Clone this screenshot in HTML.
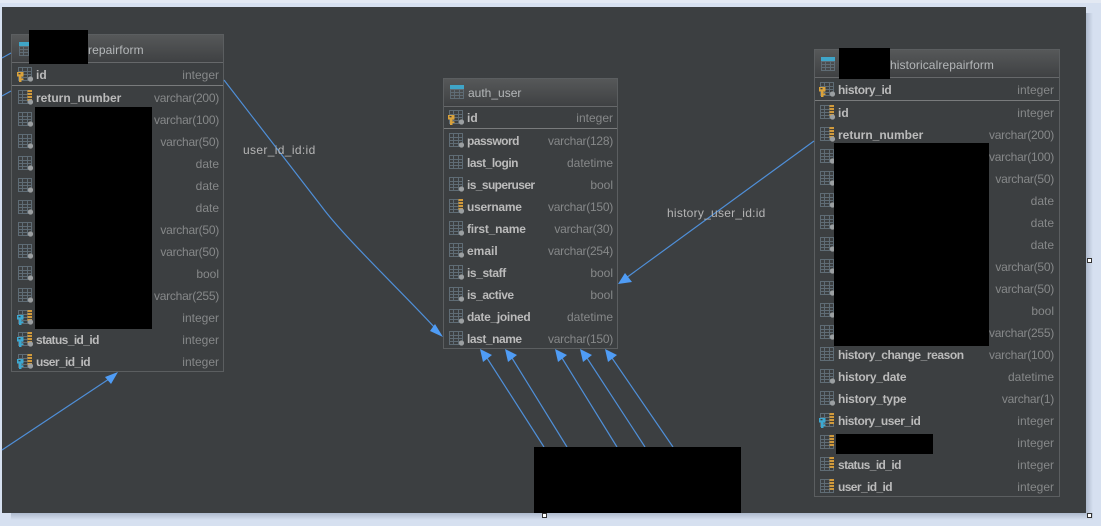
<!DOCTYPE html>
<html><head><meta charset="utf-8"><style>
html,body{margin:0;padding:0;width:1101px;height:526px;overflow:hidden;background:#d6e0f0;font-family:"Liberation Sans",sans-serif;font-size:12px}
.a{position:absolute}
.k{background:#000;position:absolute}
.t{position:absolute;box-sizing:border-box;border:1px solid #5b5e60;background:#3c3f41}
.h{position:absolute;left:0;right:0;top:0;height:27px;background:linear-gradient(#565859,#3f4143);border-bottom:1px solid #66686a;color:#b4b7b9;line-height:29px;padding-left:26px}
.r{position:absolute;left:0;right:0;height:22px;line-height:22px;padding-left:24px;font-weight:bold;color:#bbbbbb}
.n .r{padding-left:23px}
.r b{position:absolute;right:4px;top:0;font-weight:normal;color:#868889}
.w .r b{right:5px}
.r b.v{letter-spacing:-.25px}
.s{position:absolute;left:0;right:0;height:1px;background:#797b7c}
.r svg{position:absolute;left:4px;top:1px}
.n .r svg{left:3px}
.h svg{position:absolute;left:5px;top:5px}
.l{position:absolute;color:#b5b5b5;line-height:14px}
.m{position:absolute;box-sizing:border-box;width:5px;height:5px;background:#fff;border:1px solid #333}
</style></head><body>
<div class="a" style="left:0;top:0;width:1101px;height:3px;background:#e3e9f3"></div>
<div class="a" style="left:1086px;top:13px;width:7px;height:507px;background:linear-gradient(90deg,#adb9cc,#d6e0f0)"></div>
<div class="a" style="left:11px;top:513px;width:1082px;height:7px;background:linear-gradient(#adb9cc,#d6e0f0)"></div>
<div class="a" style="left:2px;top:7px;width:1084px;height:506px;background:#3c3f41"></div>

<svg width="0" height="0" style="position:absolute">
<defs>
<g id="g" fill="none" stroke="#5f6c75"><path d="M1.5 2.5h13v13h-13zM1.5 6.5h13M1.5 9.5h13M1.5 12.5h13M5.5 2.5v13M10.5 2.5v13"/></g>
<circle id="d" cx="13.5" cy="14" r="2.6" fill="#9b9fa1"/>
<g id="o"><rect x="10.5" y="2" width="4.5" height="11" fill="#d19a3c"/><path d="M10.5 4.5h4.5M10.5 7.5h4.5M10.5 10.5h4.5" stroke="#4a4335"/></g>
<g id="kg"><path d="M0 7h6.500v4.500H4.500V17H2v-5.500H0z" fill="#d9a23c"/><path d="M4.500 13.500h2v1.500h-2z" fill="#d9a23c"/><rect x="1.500" y="8" width="2" height="1.300" fill="#3c3f41"/></g>
<g id="kb"><path d="M0 7h6.500v4.500H4.500V17H2v-5.500H0z" fill="#3da8d0"/><path d="M4.500 13.500h2v1.500h-2z" fill="#3da8d0"/><rect x="1.500" y="8" width="2" height="1.300" fill="#3c3f41"/></g>
<g id="T"><use href="#g"/><rect x="1" y="2" width="14" height="4" fill="#3fa5c8"/></g>
</defs></svg>

<!-- repairform -->
<div class="t" style="left:11px;top:34px;width:213px;height:338px">
<div class="h" style="line-height:31px"><svg style="left:6px" width="18" height="18" viewBox="0 0 18 18"><use href="#T"/></svg><span style="position:absolute;left:76px;letter-spacing:.1px">repairform</span></div>
<div class="r" style="top:29px"><svg width="20" height="18" viewBox="0 0 18 18"><use href="#g"/><use href="#d"/><use href="#kg"/></svg>id<b>integer</b></div>
<div class="s" style="top:50px"></div>
<div class="r" style="top:52px"><svg width="20" height="18" viewBox="0 0 18 18"><use href="#g"/><use href="#o"/><use href="#d"/></svg>return_number<b class="v">varchar(200)</b></div>
<div class="r" style="top:74px"><svg width="20" height="18" viewBox="0 0 18 18"><use href="#g"/><use href="#d"/></svg><b class="v">varchar(100)</b></div>
<div class="r" style="top:96px"><svg width="20" height="18" viewBox="0 0 18 18"><use href="#g"/><use href="#d"/></svg><b class="v">varchar(50)</b></div>
<div class="r" style="top:118px"><svg width="20" height="18" viewBox="0 0 18 18"><use href="#g"/><use href="#d"/></svg><b>date</b></div>
<div class="r" style="top:140px"><svg width="20" height="18" viewBox="0 0 18 18"><use href="#g"/><use href="#d"/></svg><b>date</b></div>
<div class="r" style="top:162px"><svg width="20" height="18" viewBox="0 0 18 18"><use href="#g"/><use href="#d"/></svg><b>date</b></div>
<div class="r" style="top:184px"><svg width="20" height="18" viewBox="0 0 18 18"><use href="#g"/><use href="#d"/></svg><b class="v">varchar(50)</b></div>
<div class="r" style="top:206px"><svg width="20" height="18" viewBox="0 0 18 18"><use href="#g"/><use href="#d"/></svg><b class="v">varchar(50)</b></div>
<div class="r" style="top:228px"><svg width="20" height="18" viewBox="0 0 18 18"><use href="#g"/><use href="#d"/></svg><b>bool</b></div>
<div class="r" style="top:250px"><svg width="20" height="18" viewBox="0 0 18 18"><use href="#g"/><use href="#d"/></svg><b class="v">varchar(255)</b></div>
<div class="r" style="top:272px"><svg width="20" height="18" viewBox="0 0 18 18"><use href="#g"/><use href="#o"/><use href="#d"/><use href="#kb"/></svg><b>integer</b></div>
<div class="r" style="top:294px"><svg width="20" height="18" viewBox="0 0 18 18"><use href="#g"/><use href="#o"/><use href="#d"/><use href="#kb"/></svg><span style="letter-spacing:-.6px">status_id_id</span><b>integer</b></div>
<div class="r" style="top:316px"><svg width="20" height="18" viewBox="0 0 18 18"><use href="#g"/><use href="#o"/><use href="#d"/><use href="#kb"/></svg><span style="letter-spacing:-.6px">user_id_id</span><b>integer</b></div>
</div>

<!-- auth_user -->
<div class="t n" style="left:443px;top:78px;width:175px;height:271px">
<div class="h"><svg width="18" height="18" viewBox="0 0 18 18" style="top:4px"><use href="#T"/></svg><span style="position:absolute;left:24px">auth_user</span></div>
<div class="r" style="top:28px"><svg width="20" height="18" viewBox="0 0 18 18"><use href="#g"/><use href="#d"/><use href="#kg"/></svg>id<b>integer</b></div>
<div class="s" style="top:49px"></div>
<div class="r" style="top:51px"><svg width="20" height="18" viewBox="0 0 18 18"><use href="#g"/><use href="#d"/></svg><span style="letter-spacing:-.5px">password</span><b class="v">varchar(128)</b></div>
<div class="r" style="top:73px"><svg width="20" height="18" viewBox="0 0 18 18"><use href="#g"/></svg><span style="letter-spacing:-.5px">last_login</span><b>datetime</b></div>
<div class="r" style="top:95px"><svg width="20" height="18" viewBox="0 0 18 18"><use href="#g"/><use href="#d"/></svg><span style="letter-spacing:-.6px">is_superuser</span><b>bool</b></div>
<div class="r" style="top:117px"><svg width="20" height="18" viewBox="0 0 18 18"><use href="#g"/><use href="#o"/><use href="#d"/></svg><span style="letter-spacing:-.25px">username</span><b class="v">varchar(150)</b></div>
<div class="r" style="top:139px"><svg width="20" height="18" viewBox="0 0 18 18"><use href="#g"/><use href="#d"/></svg><span style="letter-spacing:-.2px">first_name</span><b class="v">varchar(30)</b></div>
<div class="r" style="top:161px"><svg width="20" height="18" viewBox="0 0 18 18"><use href="#g"/><use href="#d"/></svg>email<b class="v">varchar(254)</b></div>
<div class="r" style="top:183px"><svg width="20" height="18" viewBox="0 0 18 18"><use href="#g"/><use href="#d"/></svg><span style="letter-spacing:-.4px">is_staff</span><b>bool</b></div>
<div class="r" style="top:205px"><svg width="20" height="18" viewBox="0 0 18 18"><use href="#g"/><use href="#d"/></svg><span style="letter-spacing:-.45px">is_active</span><b>bool</b></div>
<div class="r" style="top:227px"><svg width="20" height="18" viewBox="0 0 18 18"><use href="#g"/><use href="#d"/></svg><span style="letter-spacing:-.3px">date_joined</span><b>datetime</b></div>
<div class="r" style="top:249px"><svg width="20" height="18" viewBox="0 0 18 18"><use href="#g"/><use href="#d"/></svg><span style="letter-spacing:-.45px">last_name</span><b class="v">varchar(150)</b></div>
</div>

<!-- historicalrepairform -->
<div class="t n w" style="left:814px;top:49px;width:246px;height:448px">
<div class="h" style="line-height:31px"><svg width="18" height="18" viewBox="0 0 18 18"><use href="#T"/></svg><span style="position:absolute;left:75px;letter-spacing:.1px">historicalrepairform</span></div>
<div class="r" style="top:29px"><svg width="20" height="18" viewBox="0 0 18 18"><use href="#g"/><use href="#d"/><use href="#kg"/></svg><span style="letter-spacing:-.4px">history_id</span><b>integer</b></div>
<div class="s" style="top:50px"></div>
<div class="r" style="top:52px"><svg width="20" height="18" viewBox="0 0 18 18"><use href="#g"/><use href="#o"/><use href="#d"/></svg>id<b>integer</b></div>
<div class="r" style="top:74px"><svg width="20" height="18" viewBox="0 0 18 18"><use href="#g"/><use href="#o"/><use href="#d"/></svg>return_number<b class="v">varchar(200)</b></div>
<div class="r" style="top:96px"><svg width="20" height="18" viewBox="0 0 18 18"><use href="#g"/><use href="#d"/></svg><b class="v">varchar(100)</b></div>
<div class="r" style="top:118px"><svg width="20" height="18" viewBox="0 0 18 18"><use href="#g"/><use href="#d"/></svg><b class="v">varchar(50)</b></div>
<div class="r" style="top:140px"><svg width="20" height="18" viewBox="0 0 18 18"><use href="#g"/><use href="#d"/></svg><b>date</b></div>
<div class="r" style="top:162px"><svg width="20" height="18" viewBox="0 0 18 18"><use href="#g"/><use href="#d"/></svg><b>date</b></div>
<div class="r" style="top:184px"><svg width="20" height="18" viewBox="0 0 18 18"><use href="#g"/><use href="#d"/></svg><b>date</b></div>
<div class="r" style="top:206px"><svg width="20" height="18" viewBox="0 0 18 18"><use href="#g"/><use href="#d"/></svg><b class="v">varchar(50)</b></div>
<div class="r" style="top:228px"><svg width="20" height="18" viewBox="0 0 18 18"><use href="#g"/><use href="#d"/></svg><b class="v">varchar(50)</b></div>
<div class="r" style="top:250px"><svg width="20" height="18" viewBox="0 0 18 18"><use href="#g"/><use href="#d"/></svg><b>bool</b></div>
<div class="r" style="top:272px"><svg width="20" height="18" viewBox="0 0 18 18"><use href="#g"/><use href="#d"/></svg><b class="v">varchar(255)</b></div>
<div class="r" style="top:294px"><svg width="20" height="18" viewBox="0 0 18 18"><use href="#g"/></svg><span style="letter-spacing:-.43px">history_change_reason</span><b class="v">varchar(100)</b></div>
<div class="r" style="top:316px"><svg width="20" height="18" viewBox="0 0 18 18"><use href="#g"/><use href="#d"/></svg><span style="letter-spacing:-.25px">history_date</span><b>datetime</b></div>
<div class="r" style="top:338px"><svg width="20" height="18" viewBox="0 0 18 18"><use href="#g"/><use href="#d"/></svg><span style="letter-spacing:-.25px">history_type</span><b class="v">varchar(1)</b></div>
<div class="r" style="top:360px"><svg width="20" height="18" viewBox="0 0 18 18"><use href="#g"/><use href="#o"/><use href="#kb"/></svg><span style="letter-spacing:-.47px">history_user_id</span><b>integer</b></div>
<div class="r" style="top:382px"><svg width="20" height="18" viewBox="0 0 18 18"><use href="#g"/><use href="#o"/></svg><b>integer</b></div>
<div class="r" style="top:404px"><svg width="20" height="18" viewBox="0 0 18 18"><use href="#g"/><use href="#o"/></svg><span style="letter-spacing:-.6px">status_id_id</span><b>integer</b></div>
<div class="r" style="top:426px"><svg width="20" height="18" viewBox="0 0 18 18"><use href="#g"/><use href="#o"/></svg><span style="letter-spacing:-.6px">user_id_id</span><b>integer</b></div>
</div>

<svg class="a" style="left:0;top:0" width="1101" height="526" viewBox="0 0 1101 526">
<g fill="none" stroke="#4f8fd8" stroke-width="1.2">
<path d="M2 58L11 53M2 96L11 91M224 80L322 207C345 238 400 290 436 329M814 141L626 278M2 450L112 377M544 447L487 358M567 447L512 358M617 447L562 358M645 447L587 358M673 447L612 358"/>
</g>
<g fill="#4f9cf5">
<path d="M443 337L430 331L435 324Z"/>
<path d="M618 284L625 273L632 282Z"/>
<path d="M118 372L105 377L111 384Z"/>
<path d="M480 349L483 362L492 355Z"/>
<path d="M505 349L508 362L517 355Z"/>
<path d="M555 349L558 362L567 355Z"/>
<path d="M580 349L583 362L592 355Z"/>
<path d="M605 349L608 362L617 355Z"/>
</g>
</svg>

<div class="l" style="left:243px;top:143px;letter-spacing:.35px">user_id_id:id</div>
<div class="l" style="left:667px;top:206px;letter-spacing:.25px">history_user_id:id</div>

<div class="k" style="left:29px;top:30px;width:59px;height:34px"></div>
<div class="k" style="left:35px;top:107px;width:117px;height:222px"></div>
<div class="k" style="left:839px;top:48px;width:51px;height:31px"></div>
<div class="k" style="left:834px;top:143px;width:155px;height:203px"></div>
<div class="k" style="left:836px;top:434px;width:97px;height:20px"></div>
<div class="k" style="left:534px;top:447px;width:207px;height:66px"></div>

<div class="m" style="left:542px;top:513px"></div>
<div class="m" style="left:1087px;top:258px"></div>
<div class="m" style="left:1087px;top:513px"></div>
</body></html>
